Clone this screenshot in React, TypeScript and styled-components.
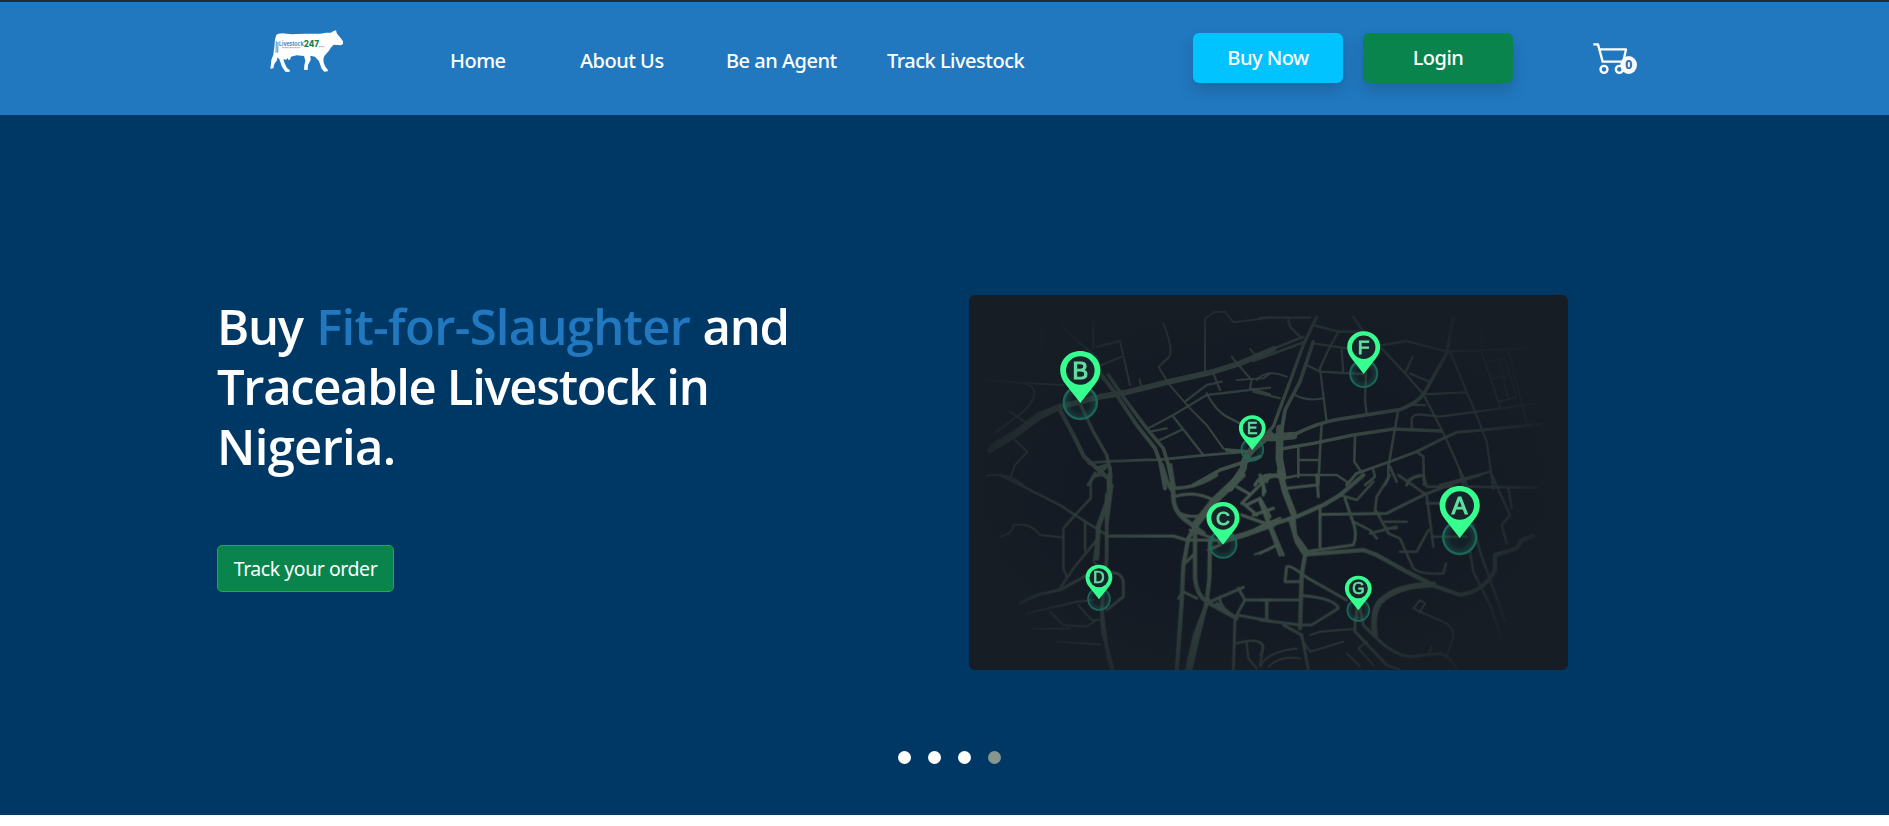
import React from "react";
import styled, { createGlobalStyle } from "styled-components";

const GlobalStyle = createGlobalStyle`
  *, *::before, *::after { box-sizing: border-box; }
  body { margin: 0; background: #fff; font-family: "Noto Sans", sans-serif; }
`;

const Page = styled.div`
  height: 826px;
  overflow: hidden;
`;

const Header = styled.header`
  display: flex;
  align-items: flex-start;
  height: 115px;
  padding: 18px 0 0 255px;
  border-top: 2px solid #2b2b2b;
  background: #2178bf;
`;

const Logo = styled.svg`
  flex: none;
  width: 100px;
  height: 60px;
`;

const Nav = styled.nav`
  display: grid;
  grid-template-columns: 130px 146px 161px 140px;
  margin: 26px 0 0 95px;
`;

const NavLink = styled.a`
  color: #fff;
  font-size: 20px;
  font-weight: 500;
  line-height: 30px;
  letter-spacing: -0.5px;
  white-space: nowrap;
`;

const Actions = styled.div`
  display: flex;
  gap: 20px;
  margin: 13px 0 0 166px;
`;

const ActionButton = styled.button<{ $tone: string }>`
  width: 150px;
  height: 50px;
  padding: 0;
  border: 0;
  border-radius: 6px;
  background: ${(p) => p.$tone};
  box-shadow: 0 8px 16px rgba(0, 0, 0, 0.15);
  color: #fff;
  font: 500 20px/30px "Noto Sans", sans-serif;
  letter-spacing: -0.5px;
`;

const Cart = styled.svg`
  flex: none;
  width: 60px;
  height: 45px;
  margin: 15px 0 0 72px;
`;

const Hero = styled.main`
  display: flex;
  flex-direction: column;
  height: 700px;
  padding: 180px 0 0 217px;
  background: #003865;
`;

const Slide = styled.section`
  display: grid;
  grid-template-columns: 752px 600px;
  height: 456px;
`;

const Headline = styled.h1`
  margin: 1px 0 69px;
  color: #fff;
  font: 600 49px/60px "Open Sans", sans-serif;
  white-space: nowrap;
`;

const HeadlineLine = styled.span<{ $tracking: number }>`
  display: block;
  letter-spacing: ${(p) => p.$tracking}px;
`;

const Accent = styled.span`
  margin: 0 1px 0 2px;
  color: #2178bf;
  letter-spacing: -0.75px;
`;

const TrackButton = styled.button`
  width: 177px;
  height: 47px;
  padding: 0;
  border: 1px solid #28a745;
  border-radius: 5px;
  background: #08844c;
  color: #fff;
  font: 400 19.5px/30px "Noto Sans", sans-serif;
  letter-spacing: -0.45px;
`;

const MapCard = styled.svg`
  width: 599px;
  height: 375px;
  border-radius: 6px;
  background: #161d25;
`;

const Dots = styled.div`
  display: flex;
  gap: 17px;
  padding-left: 681px;
`;

const Dot = styled.span<{ $active?: boolean }>`
  width: 13px;
  height: 13px;
  border-radius: 50%;
  background: ${(p) => (p.$active ? "#87968f" : "#fff")};
`;

type Road = [width: number, d: string];

const northWest: Road[] = [
  [16, "M90 495L165 450L240 395L300 365L420 335L500 322L620 292L760 260L840 235L940 192"],
  [7, "M95 480L170 435L235 385L300 360"],
  [12, "M300 375L340 450L372 515L405 545L445 580L450 610"],
  [9, "M362 360L400 440L440 510L452 560"],
  [11, "M420 265L470 330L530 420L585 490L600 530L615 610"],
  [10, "M445 270L500 350L560 430L610 490L625 540L640 610"],
  [7, "M385 535Q430 528 600 524L720 512L860 500"],
  [5, "M110 440L190 380Q240 330 215 305Q190 290 80 285M150 292L310 300M150 380L200 415"],
  [5, "M165 465L202 500L165 540L152 575M80 572Q140 560 190 600"],
  [5, "M410 185L480 168L510 300M425 240L485 215M538 282L545 305"],
  [5, "M610 115Q640 190 628 215L596 245L625 295L690 370L740 420L790 490L820 500"],
  [5, "M735 255L735 100L765 80L795 80L820 112L930 98M245 125V185M300 115L360 175L410 215L430 280M400 105V190"],
  [6, "M565 430L640 390L740 330L930 308M570 440L620 430M590 470L670 432M640 395L730 510"],
  [6, "M675 350L740 300L785 290M760 265L780 315M740 325Q765 375 800 395L840 415M815 215L840 245L875 285L870 310L930 328"],
  [5, "M830 285L910 280L930 265M870 192L890 215"],
  [20, "M930 448L880 490Q850 520 850 550L810 610"],
  [10, "M900 515L780 555L700 600M860 500L800 495"],
  [9, "M440 540L410 550M450 545V600M410 570L440 545M405 565L385 600M930 570Q900 570 885 600"],
];

const northEast: Road[] = [
  [9, "M170 95L130 180L90 290L60 370L40 425L10 455"],
  [10, "M160 170L120 290L75 375L62 450"],
  [7, "M-20 215L130 155M-20 228L135 170M85 105L90 125L125 160M0 98H150M160 120L235 140H310L280 95"],
  [6, "M160 175L260 190L370 180L440 168L560 200L800 190"],
  [6, "M235 140L205 195L180 250L200 410M140 240L180 260L310 267M245 195L250 265M318 265L315 345L320 385"],
  [5, "M-10 285Q20 250 80 275M-20 320L60 340M105 330Q145 350 190 340"],
  [10, "M10 460L100 450Q180 410 240 402L420 374Q480 350 495 320L560 205L580 100"],
  [9, "M62 492L160 475L280 450L400 432L545 438"],
  [6, "M365 190L440 270L490 328L520 385L560 465L620 600M435 265L458 215M450 265L512 292M490 328L615 322"],
  [6, "M570 200L645 380L680 470L700 610M455 360L495 360M455 430V400Q460 388 480 388L540 395L650 380L830 355"],
  [8, "M260 600L290 565L390 530L470 500L550 460L590 442L670 435L845 417"],
  [5, "M665 140V200L720 365M745 195L800 415M685 230L735 220L770 335L715 350M700 280L750 272M720 230L742 335"],
  [7, "M415 375L405 430L385 545M285 455L283 530L300 555M185 420L180 500L175 600M115 490V575M115 525H178M70 580L120 570H230L260 590"],
  [7, "M470 500L490 515L492 600M540 600L690 560M390 545L410 590M340 555L345 575L315 600M385 545V580L375 600M440 600Q450 575 490 572"],
  [22, "M60 430L58 520L68 575M30 458L100 452"],
  [9, "M75 380L62 455L100 450M0 590Q10 570 50 570"],
];

const southWest: Road[] = [
  [7, "M120 0L200 40L300 90L345 120L440 180"],
  [9, "M440 183H640L680 195H780"],
  [14, "M450 0L445 70L415 155L410 250"],
  [10, "M440 60L440 250L425 400L440 520L455 590M455 30L440 150M425 400L428 470L460 590"],
  [7, "M430 0Q390 0 392 30V70L345 120L310 160V280L320 305M375 145V225M410 195L340 280L300 340"],
  [8, "M180 385L230 360L300 345L390 295M430 300Q480 280 490 320V365L440 405"],
  [5, "M120 185Q160 175 160 150Q210 140 240 180L310 187M200 415L350 380L400 375M270 410L310 450L380 455L410 435M355 390L395 435H430M220 462L330 460M290 500L420 508M410 200L400 260L425 280"],
  [13, "M605 -30L620 20L640 50Q635 100 670 130L730 175M630 -30L640 35"],
  [9, "M640 65Q705 45 760 75M635 40Q710 40 770 0M660 115Q690 130 740 120L760 90"],
  [22, "M845 0L760 80L705 150"],
  [12, "M720 130L685 190L670 270L665 380L650 590M705 170V310Q710 360 740 380L830 430"],
  [12, "M750 195L748 310L740 380L710 500L690 590M745 375L705 480L680 590"],
  [16, "M780 200L850 180L940 148"],
  [8, "M690 165L760 190M675 265L705 235M655 370L670 350L710 370M745 225L780 210"],
  [8, "M750 380L850 337M780 365Q775 395 825 425M835 340L855 375H930M855 375L830 420L930 438M920 380V435M770 385L825 430L820 590"],
  [6, "M830 505Q900 485 910 515L900 570M860 505L865 550L890 580M885 238L930 222"],
  [9, "M830 35L865 55M845 85L890 40L930 0M850 85L890 120M860 90L900 70L930 125M880 120L940 100M910 20V60M845 120L930 150"],
];

const southEast: Road[] = [
  [18, "M60 -10L75 50L100 115"],
  [12, "M100 125L105 180L145 235M90 130L110 200L135 240L125 300L120 460"],
  [12, "M-10 162L110 125L190 90L240 60L310 0"],
  [12, "M140 238L310 225L350 240L440 290L530 335L600 360Q660 350 690 310L705 285V240L770 220L785 195L820 183"],
  [8, "M0 75L70 240M0 155L60 130M0 235L50 210M75 40L170 30M170 0L175 65M180 95V215M150 228L280 210Q295 175 275 130L255 70M185 118L380 115L490 60L580 25L660 0"],
  [7, "M240 60L290 75L340 20M280 140L330 165L350 190M345 110L350 65L390 0M350 110L385 175L420 190L435 225L460 280Q480 300 550 295L558 265M375 140H440M380 160H410M330 175L410 155M420 230H470L505 165"],
  [7, "M415 0L500 60L520 215M490 0L500 35M480 0Q440 10 440 30M500 35H640L830 38M600 -10L660 230L735 440M500 85H640M520 185H620"],
  [7, "M695 0L750 120L725 150L740 205M745 40L755 100M630 230L640 290L690 390L725 490"],
  [17, "M345 480Q335 410 360 380Q410 330 520 328"],
  [8, "M75 320L80 275Q90 268 130 300L145 310L260 375M75 320H120M0 375H115M20 380V435M0 435L120 450H155L235 400Q225 370 130 362M70 450L125 480L145 585"],
  [8, "M285 430V470L380 570L420 585M300 400L310 450L350 490Q400 540 450 545L540 535Q570 545 590 580"],
  [5, "M480 375L495 385L480 410L460 400L480 375M480 410L560 445Q590 470 575 500L560 545M150 480L180 470L280 462M130 500L150 530L250 500M320 500L295 520L340 570M260 535L300 575M25 575Q60 540 120 550M0 500Q15 520 0 540M0 575Q20 530 110 520M515 515L505 540"],
  [9, "M0 0L15 50M20 20Q20 0 60 5M60 240L0 80M290 400L290 430"],
];

const quadrants = [
  { x: 0, y: 0, roads: northWest },
  { x: 900, y: 0, roads: northEast },
  { x: 0, y: 570, roads: southWest },
  { x: 900, y: 570, roads: southEast },
];

const pins = [
  { label: "B", x: 111.3, y: 75.5, r: 19.5 },
  { label: "F", x: 394.7, y: 52.3, r: 16 },
  { label: "E", x: 283.3, y: 133.3, r: 13 },
  { label: "C", x: 254, y: 223, r: 16 },
  { label: "D", x: 130, y: 282.7, r: 13 },
  { label: "A", x: 490.7, y: 210.5, r: 19.5 },
  { label: "G", x: 389.3, y: 293.7, r: 13 },
];

function Pin({ label, x, y, r }: { label: string; x: number; y: number; r: number }) {
  return (
    <g transform={`translate(${x} ${y}) scale(${r / 19.5})`}>
      <circle cy="32" r="16.5" fill="url(#halo)" stroke="#1c6659" strokeWidth="2.4" />
      <path d="M0 32.5L-14.5 14C-27 -1 -17 -19.5 0 -19.5S27 -1 14.5 14Z" fill="#36ff90" />
      <circle r="14.3" fill="#17242a" />
      <text y="8.3" textAnchor="middle" fill="#62dfa0" stroke="#62dfa0" strokeWidth="1.1" fontFamily="Liberation Sans, sans-serif" fontSize="23.5">
        {label}
      </text>
    </g>
  );
}

function LivestockMap() {
  return (
    <MapCard viewBox="0 0 599 375">
      <defs>
        <radialGradient id="glow" gradientUnits="userSpaceOnUse" cx="0" cy="0" r="1" gradientTransform="translate(290 205) scale(300 225)">
          <stop offset="0" stopColor="#fff" />
          <stop offset="0.35" stopColor="#ccc" />
          <stop offset="0.75" stopColor="#666" />
          <stop offset="1" stopColor="#161616" />
        </radialGradient>
        <radialGradient id="ground">
          <stop offset="0.6" stopColor="#141a23" />
          <stop offset="1" stopColor="#141a23" stopOpacity="0" />
        </radialGradient>
        <radialGradient id="halo">
          <stop offset="0.5" stopColor="#1f7f6b" stopOpacity="0.06" />
          <stop offset="1" stopColor="#1f7f6b" stopOpacity="0.35" />
        </radialGradient>
        <mask id="fade" maskUnits="userSpaceOnUse" x="0" y="0" width="599" height="375">
          <rect width="599" height="375" fill="url(#glow)" />
        </mask>
        <filter id="soft" x="0" y="0" width="1" height="1">
          <feGaussianBlur stdDeviation="0.7" />
        </filter>
      </defs>
      <ellipse cx="295" cy="195" rx="300" ry="190" fill="url(#ground)" />
      <g mask="url(#fade)">
        <g filter="url(#soft)">
          <g transform="translate(-9 -10) scale(0.33333)" fill="none" stroke="#46584f" strokeLinecap="round" strokeLinejoin="round">
            {quadrants.map((q) => (
              <g key={`${q.x}-${q.y}`} transform={`translate(${q.x} ${q.y})`}>
                {q.roads.map(([width, d]) => (
                  <path key={d} d={d} strokeWidth={width + 1} strokeOpacity={width < 8 ? 0.85 : 0.95} />
                ))}
              </g>
            ))}
          </g>
        </g>
      </g>
      {pins.map((pin) => (
        <Pin key={pin.label} {...pin} />
      ))}
    </MapCard>
  );
}

function CowLogo() {
  return (
    <Logo viewBox="0 0 300 180">
      <path
        fill="#fff"
        d="M64 45Q68 40 82 40L110 43L150 41L196 41L214 38L228 38L234 34L243 31L246 41L254 50L264 64L264 72L257 76L246 75L236 74Q226 83 222 92L208 108Q203 118 206 128L211 140L219 150L218 154L208 155L200 146L192 124L180 110L166 107L167 120L159 135L158 150L147 149L148 136L151 122L147 108L125 106L108 110L106 118L101 121L98 114L94 119L85 118L89 130L96 144L105 151L103 156L91 155L81 140L73 118L68 112L65 122L58 132L55 145L46 146L48 132L49 120L55 104L58 80L60 58Z"
      />
      <path d="M64 64L63 98M69 66L68 98" stroke="#2178bf" strokeWidth="2.5" />
      <text x="72" y="79" fill="#2178bf" fontFamily="Inter, sans-serif" fontWeight="600" fontSize="17" textLength="74" lengthAdjust="spacingAndGlyphs">
        Livestock
      </text>
      <text x="146" y="82" fill="#168048" fontFamily="Inter, sans-serif" fontWeight="800" fontSize="27" textLength="46" lengthAdjust="spacingAndGlyphs">
        247
      </text>
      <path d="M80 83H136M192 80H209" stroke="#8496ae" strokeWidth="2.5" strokeDasharray="4 1" />
    </Logo>
  );
}

function CartIcon() {
  return (
    <Cart viewBox="0 0 180 135">
      <g fill="none" stroke="#fff" strokeWidth="7" strokeLinejoin="round">
        <path d="M25 28H39L53 80H115L123 43H44" />
        <circle cx="57" cy="103" r="10.5" />
        <circle cx="103" cy="103" r="10.5" />
      </g>
      <ellipse cx="131" cy="90" rx="25" ry="27" fill="#f8f9fa" />
      <text x="131" y="103" textAnchor="middle" fill="#2168a8" fontFamily="Noto Sans, sans-serif" fontWeight="700" fontSize="37">
        0
      </text>
    </Cart>
  );
}

export default function App() {
  return (
    <Page>
      <GlobalStyle />
      <Header>
        <CowLogo />
        <Nav>
          <NavLink>Home</NavLink>
          <NavLink>About Us</NavLink>
          <NavLink>Be an Agent</NavLink>
          <NavLink>Track Livestock</NavLink>
        </Nav>
        <Actions>
          <ActionButton $tone="#00c3ff">Buy Now</ActionButton>
          <ActionButton $tone="#08844c">Login</ActionButton>
        </Actions>
        <CartIcon />
      </Header>
      <Hero>
        <Slide>
          <div>
            <Headline>
              <HeadlineLine $tracking={-1.3}>
                Buy <Accent>Fit-for-Slaughter</Accent> and
              </HeadlineLine>
              <HeadlineLine $tracking={-1.35}>Traceable Livestock in</HeadlineLine>
              <HeadlineLine $tracking={-0.7}>Nigeria.</HeadlineLine>
            </Headline>
            <TrackButton>Track your order</TrackButton>
          </div>
          <LivestockMap />
        </Slide>
        <Dots>
          <Dot />
          <Dot />
          <Dot />
          <Dot $active />
        </Dots>
      </Hero>
    </Page>
  );
}
